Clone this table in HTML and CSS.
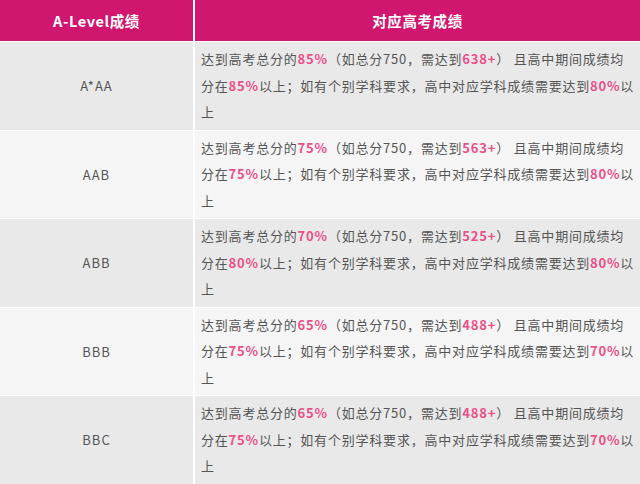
FILE: index.html
```html
<!DOCTYPE html>
<html lang="zh">
<head>
<meta charset="utf-8">
<link rel="stylesheet" href="styles.css">
</head>
<body>
<div class="table">
  <div class="th">A-Level成绩</div>
  <div class="th">对应高考成绩</div>

  <div class="grade odd">A*AA</div>
  <div class="desc odd">达到高考总分的<b>85%</b>（如总分750，需达到<b>638+</b>） 且高中期间成绩均<br>分在<b>85%</b>以上；如有个别学科要求，高中对应学科成绩需要达到<b>80%</b>以<br>上</div>

  <div class="grade even">AAB</div>
  <div class="desc even">达到高考总分的<b>75%</b>（如总分750，需达到<b>563+</b>） 且高中期间成绩均<br>分在<b>75%</b>以上；如有个别学科要求，高中对应学科成绩需要达到<b>80%</b>以<br>上</div>

  <div class="grade odd">ABB</div>
  <div class="desc odd">达到高考总分的<b>70%</b>（如总分750，需达到<b>525+</b>） 且高中期间成绩均<br>分在<b>80%</b>以上；如有个别学科要求，高中对应学科成绩需要达到<b>80%</b>以<br>上</div>

  <div class="grade even">BBB</div>
  <div class="desc even">达到高考总分的<b>65%</b>（如总分750，需达到<b>488+</b>） 且高中期间成绩均<br>分在<b>75%</b>以上；如有个别学科要求，高中对应学科成绩需要达到<b>70%</b>以<br>上</div>

  <div class="grade odd">BBC</div>
  <div class="desc odd">达到高考总分的<b>65%</b>（如总分750，需达到<b>488+</b>） 且高中期间成绩均<br>分在<b>75%</b>以上；如有个别学科要求，高中对应学科成绩需要达到<b>70%</b>以<br>上</div>
</div>
</body>
</html>
```
FILE: styles.css
```css
html, body {
  margin: 0;
  padding: 0;
  background: #ffffff;
}
body {
  font-family: "Noto Sans CJK SC", "Noto Sans", sans-serif;
  color: #555555;
  overflow: hidden;
}
.table {
  display: grid;
  grid-template-columns: 193px 1fr;
  grid-template-rows: 41px;
  grid-auto-rows: 87.5px;
  gap: 1px 2px;
  width: 640px;
  background: #ffffff;
}
.th {
  background: #d0166f;
  color: #ffffff;
  font-weight: bold;
  font-size: 14.5px;
  letter-spacing: 0.6px;
  display: flex;
  align-items: center;
  justify-content: center;
}
.grade {
  display: flex;
  align-items: center;
  justify-content: center;
  font-size: 13px;
  letter-spacing: 1px;
  color: #555555;
}
.desc {
  font-size: 13px;
  line-height: 26.5px;
  letter-spacing: 0.8px;
  white-space: nowrap;
  overflow: hidden;
  padding: 4px 0 0 6px;
  color: #555555;
}
.desc b {
  color: #ea4f8a;
  font-weight: bold;
}
.odd {
  background: #e9e9e9;
}
.even {
  background: #f5f5f5;
}
```
